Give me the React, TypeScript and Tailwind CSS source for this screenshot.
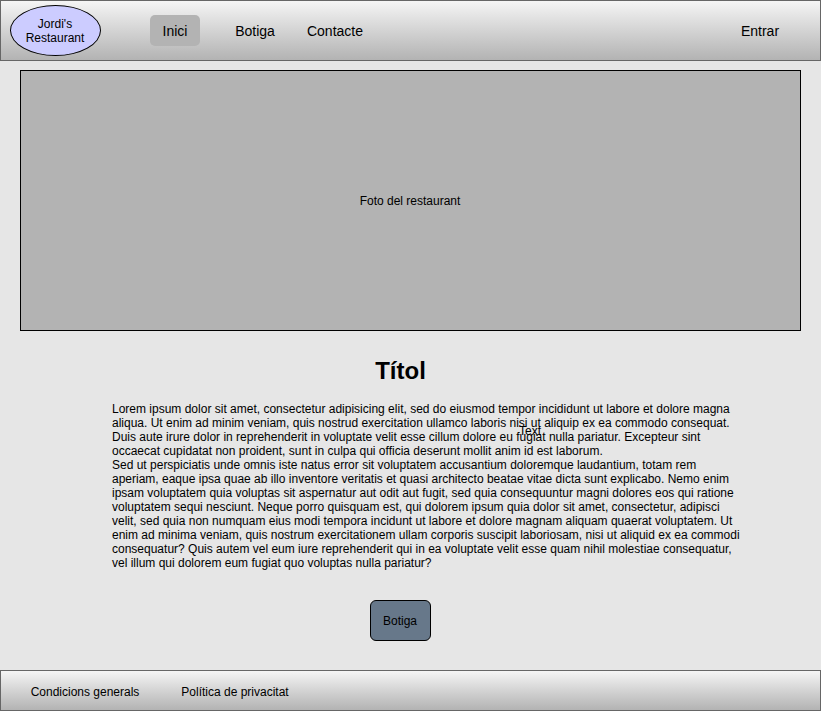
const navLinks = [
  { label: 'Inici', current: true },
  { label: 'Botiga', current: false },
  { label: 'Contacte', current: false },
];

const legalLinks = ['Condicions generals', 'Política de privacitat'];

function Header() {
  return (
    <header className="flex h-[61px] items-center border border-[#666666] bg-linear-to-b from-[#f5f5f5] to-[#b3b3b3] text-sm">
      <a
        href="#inici"
        className="ml-[9px] flex h-[51px] w-[91px] shrink-0 items-center justify-center rounded-[50%] border border-black bg-[#ccccff] pr-px text-center text-xs leading-[14px]"
      >
        Jordi's
        <br />
        Restaurant
      </a>
      <nav aria-label="Principal" className="ml-[34px] flex">
        {navLinks.map(({ label, current }) => (
          <div key={label} className="flex w-20 justify-center">
            <a
              href={'#' + label.toLowerCase()}
              aria-current={current ? 'page' : undefined}
              className={
                current
                  ? 'flex h-[31px] w-[50px] items-center justify-center rounded-[5px] bg-[#b3b3b3]'
                  : 'flex h-[31px] items-center'
              }
            >
              {label}
            </a>
          </div>
        ))}
      </nav>
      <a href="#entrar" className="mr-5 ml-auto w-20 text-center">
        Entrar
      </a>
    </header>
  );
}

function Footer() {
  return (
    <footer className="mt-auto flex h-[41px] items-center border border-[#666666] bg-linear-to-b from-[#f5f5f5] to-[#b3b3b3] pl-[9px]">
      {legalLinks.map((label) => (
        <a key={label} href="#legal" className="w-[150px] pt-[3px] text-center">
          {label}
        </a>
      ))}
    </footer>
  );
}

export default function App() {
  return (
    <div className="flex min-h-screen flex-col bg-[#e6e6e6] font-['Liberation_Sans',Arial,sans-serif] text-xs leading-[14px] text-black">
      <Header />
      <main className="flex flex-col pb-[29px]">
        <div
          role="img"
          aria-label="Foto del restaurant"
          className="mx-5 mt-[9px] flex h-[261px] items-center justify-center border border-black bg-[#b3b3b3] pr-px"
        >
          Foto del restaurant
        </div>
        <h1 className="mt-6 pr-5 text-center text-2xl leading-8 font-bold">Títol</h1>
        <div className="relative mt-[15px] mr-[79px] ml-28">
          <p>
            Lorem ipsum dolor sit amet, consectetur adipisicing elit, sed do eiusmod tempor incididunt ut labore et
            dolore magna aliqua. Ut enim ad minim veniam, quis nostrud exercitation ullamco laboris nisi ut aliquip ex
            ea commodo consequat. Duis aute irure dolor in reprehenderit in voluptate velit esse cillum dolore eu fugiat
            nulla pariatur. Excepteur sint occaecat cupidatat non proident, sunt in culpa qui officia deserunt mollit
            anim id est laborum.
          </p>
          <p>
            Sed ut perspiciatis unde omnis iste natus error sit voluptatem accusantium doloremque laudantium, totam rem
            aperiam, eaque ipsa quae ab illo inventore veritatis et quasi architecto beatae vitae dicta sunt explicabo.
            Nemo enim ipsam voluptatem quia voluptas sit aspernatur aut odit aut fugit, sed quia consequuntur magni
            dolores eos qui ratione voluptatem sequi nesciunt. Neque porro quisquam est, qui dolorem ipsum quia dolor
            sit amet, consectetur, adipisci velit, sed quia non numquam eius modi tempora incidunt ut labore et dolore
            magnam aliquam quaerat voluptatem. Ut enim ad minima veniam, quis nostrum exercitationem ullam corporis
            suscipit laboriosam, nisi ut aliquid ex ea commodi consequatur? Quis autem vel eum iure reprehenderit qui in
            ea voluptate velit esse quam nihil molestiae consequatur, vel illum qui dolorem eum fugiat quo voluptas
            nulla pariatur?
          </p>
          <span className="absolute top-[22px] left-[407px]">Text</span>
        </div>
        <div className="mt-[30px] flex justify-center pr-5">
          <button type="button" className="h-[41px] w-[61px] rounded-md border border-black bg-[#67788a] pr-px">
            Botiga
          </button>
        </div>
      </main>
      <Footer />
    </div>
  );
}
